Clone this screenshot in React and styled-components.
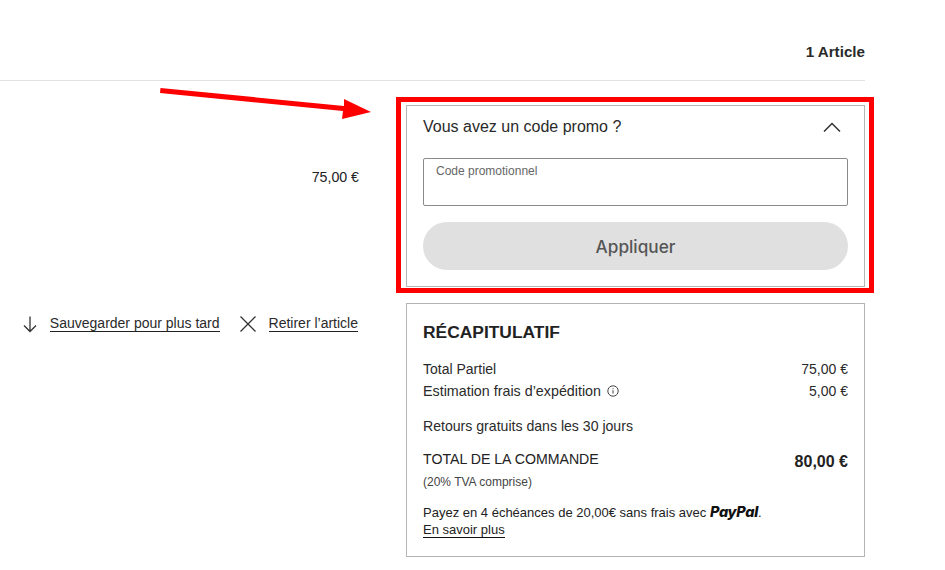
import React from "react";
import styled, { createGlobalStyle } from "styled-components";

const GlobalStyle = createGlobalStyle`
	html, body {
		margin: 0;
		padding: 0;
		background: #fff;
		color: #222;
		font-family: "Liberation Sans", Arial, sans-serif;
	}
	* {
		box-sizing: border-box;
	}
`;

const Page = styled.div`
	position: relative;
	width: 945px;
	height: 570px;
	overflow: hidden;
`;

const Content = styled.div`
	width: 865px;
`;

const Header = styled.header`
	height: 81px;
	padding-top: 43px;
	border-bottom: 1px solid #e2e2e2;
	text-align: right;
	font-size: 15.2px;
	line-height: 18px;
	font-weight: 700;
	color: #2a2a2a;
`;

const Columns = styled.div`
	display: grid;
	grid-template-columns: 359px 459px;
	column-gap: 47px;
	padding-top: 24px;
`;

const LeftColumn = styled.div`
	display: flex;
	flex-direction: column;
	align-items: flex-end;
`;

const ItemPrice = styled.div`
	margin-top: 64px;
	font-size: 14.2px;
	line-height: 16px;
	color: #222;
`;

const Actions = styled.div`
	display: flex;
	align-items: center;
	margin-top: 129px;
	margin-right: 1px;
`;

const ActionIcon = styled.svg`
	width: 20px;
	height: 20px;
	margin-right: ${(props) => props.$gap}px;
	fill: none;
	stroke: #333;
	stroke-width: 1.3;
`;

const ActionLink = styled.a`
	font-size: 14px;
	line-height: 15px;
	color: #2a2a2a;
	border-bottom: 1px solid #222;
	margin-right: ${(props) => props.$gap || 0}px;
`;

const RightColumn = styled.div`
	display: flex;
	flex-direction: column;
	gap: 16px;
`;

const Card = styled.section`
	border: 1px solid #b4b4b4;
	padding: 0 16px;
`;

const PromoCard = styled(Card)`
	height: 182px;
`;

const PromoHeader = styled.div`
	display: flex;
	justify-content: space-between;
	align-items: center;
	height: 42px;
	margin-bottom: 10px;
	font-size: 16px;
	color: #2a2a2a;
`;

const Chevron = styled.svg`
	width: 18px;
	height: 10px;
	fill: none;
	stroke: #333;
	stroke-width: 1.5;
	margin-right: 7px;
`;

const CodeField = styled.div`
	height: 48px;
	border: 1px solid #8a8a8a;
	border-radius: 2px;
	padding: 5px 12px;
	font-size: 12px;
	line-height: 14px;
	color: #666;
`;

const ApplyButton = styled.button`
	display: block;
	width: 100%;
	height: 48px;
	margin-top: 16px;
	padding: 0;
	border: 0;
	border-radius: 24px;
	background: #e0e0e0;
	font-family: "Inter", "Liberation Sans", sans-serif;
	font-size: 17.2px;
	font-weight: 500;
	color: #555;
`;

const SummaryCard = styled(Card)`
	height: 254px;
	padding-top: 17px;
	font-size: 14px;
	color: #2a2a2a;
`;

const SummaryTitle = styled.h2`
	margin: 0 0 15px;
	font-size: 17.4px;
	line-height: 22px;
	font-weight: 700;
	color: #222;
`;

const Row = styled.div`
	display: flex;
	justify-content: space-between;
	align-items: center;
	height: 22px;
`;

const Label = styled.span`
	display: flex;
	align-items: center;
	gap: 6px;
	font-size: 14.3px;
`;

const InfoIcon = styled.svg`
	width: 12px;
	height: 12px;
	fill: none;
	stroke: #444;
	stroke-width: 1;
`;

const Returns = styled.p`
	margin: 13px 0 0;
	font-size: 14.1px;
	line-height: 22px;
`;

const TotalRow = styled.div`
	display: flex;
	justify-content: space-between;
	margin-top: 13px;
`;

const TotalLabel = styled.div`
	font-size: 14.15px;
	line-height: 18px;
	color: #222;
`;

const TotalValue = styled.div`
	margin-top: 3px;
	font-size: 16px;
	line-height: 18px;
	font-weight: 700;
	color: #222;
`;

const Vat = styled.div`
	margin-top: 4px;
	font-size: 12px;
	line-height: 14px;
	color: #444;
`;

const Installments = styled.p`
	margin: 15px 0 0;
	font-size: 13px;
	line-height: 17px;
	color: #222;
`;

const PayPal = styled.span`
	font-family: "Inter", "Liberation Sans", sans-serif;
	font-size: 14.5px;
	line-height: 1;
	font-weight: 800;
	font-style: italic;
	letter-spacing: -0.3px;
	color: #111;
`;

const LearnMore = styled.a`
	display: inline-block;
	line-height: 15px;
	border-bottom: 1px solid #111;
	color: #222;
`;

const Highlight = styled.div`
	position: absolute;
	left: 396px;
	top: 97px;
	width: 478px;
	height: 196px;
	border: 5px solid #ff0000;
	pointer-events: none;
`;

const Arrow = styled.svg`
	position: absolute;
	left: 160px;
	top: 87px;
	width: 215px;
	height: 34px;
`;

export default function App() {
	return (
		<Page>
			<GlobalStyle />
			<Content>
				<Header>1 Article</Header>
				<Columns>
					<LeftColumn>
						<ItemPrice>75,00 €</ItemPrice>
						<Actions>
							<ActionIcon $gap={10} viewBox="0 0 20 20">
								<path d="M10 2.5v15M4 11.5l6 6 6-6" />
							</ActionIcon>
							<ActionLink $gap={18}>Sauvegarder pour plus tard</ActionLink>
							<ActionIcon $gap={11} viewBox="0 0 20 20">
								<path d="M2.5 2.5l15 15M17.5 2.5l-15 15" />
							</ActionIcon>
							<ActionLink>Retirer l’article</ActionLink>
						</Actions>
					</LeftColumn>
					<RightColumn>
						<PromoCard>
							<PromoHeader>
								Vous avez un code promo ?
								<Chevron viewBox="0 0 18 10">
									<path d="M1 9.5L9 1.5l8 8" />
								</Chevron>
							</PromoHeader>
							<CodeField>Code promotionnel</CodeField>
							<ApplyButton>Appliquer</ApplyButton>
						</PromoCard>
						<SummaryCard>
							<SummaryTitle>RÉCAPITULATIF</SummaryTitle>
							<Row>
								<span>Total Partiel</span>
								<span>75,00 €</span>
							</Row>
							<Row>
								<Label>
									Estimation frais d’expédition
									<InfoIcon viewBox="0 0 12 12">
										<circle cx="6" cy="6" r="5.2" />
										<path d="M6 5.2v3.4M6 3.2v1" />
									</InfoIcon>
								</Label>
								<span>5,00 €</span>
							</Row>
							<Returns>Retours gratuits dans les 30 jours</Returns>
							<TotalRow>
								<TotalLabel>TOTAL DE LA COMMANDE</TotalLabel>
								<TotalValue>80,00 €</TotalValue>
							</TotalRow>
							<Vat>(20% TVA comprise)</Vat>
							<Installments>
								Payez en 4 échéances de 20,00€ sans frais avec <PayPal>PayPal</PayPal>.
								<br />
								<LearnMore>En savoir plus</LearnMore>
							</Installments>
						</SummaryCard>
					</RightColumn>
				</Columns>
			</Content>
			<Highlight />
			<Arrow viewBox="0 0 215 34">
				<path d="M0.5 1L184 19L184 12L211 25L182 32L183 24L0 6Z" fill="#ff0000" />
			</Arrow>
		</Page>
	);
}
